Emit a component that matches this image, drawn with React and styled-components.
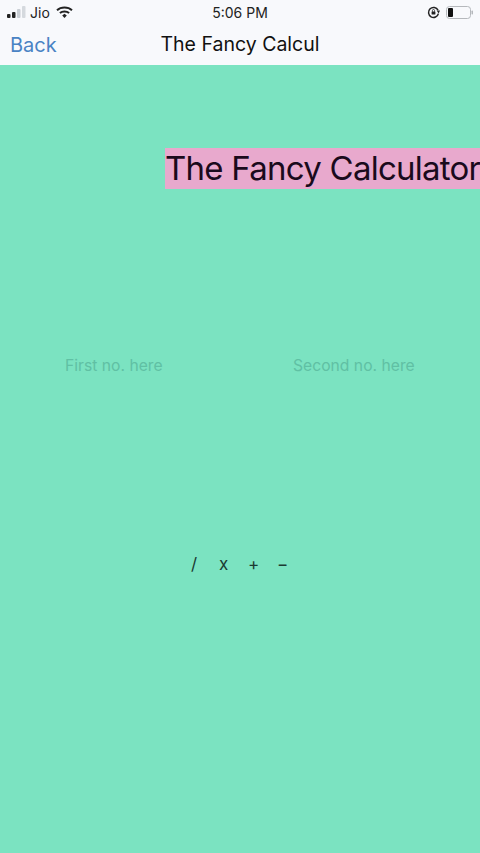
import styled, { createGlobalStyle } from 'styled-components';

const GlobalStyle = createGlobalStyle`
    html, body {
        margin: 0;
        padding: 0;
    }
    body {
        font-family: Inter, "Liberation Sans", sans-serif;
    }
`;

export default function App() {
    return (
        <Page>
            <GlobalStyle />
            <StatusBar>
                <StatusLeft>
                    <svg width="22" height="12" viewBox="0 0 22 12">
                        <rect x="0" y="8" width="3.5" height="4" rx="1" fill="#222" />
                        <rect x="5" y="6" width="3.5" height="6" rx="1" fill="#222" />
                        <rect x="10" y="3" width="3.5" height="9" rx="1" fill="#c9ced4" />
                        <rect x="15" y="0" width="3.5" height="12" rx="1" fill="#d5d9de" />
                    </svg>
                    <Carrier>Jio</Carrier>
                    <svg width="17" height="12" viewBox="0 0 17 12">
                        <path d="M1 4.2 C5 0.6 12 0.6 16 4.2" fill="none" stroke="#222" strokeWidth="2" />
                        <path d="M3.9 7 C6.4 4.9 10.6 4.9 13.1 7" fill="none" stroke="#222" strokeWidth="2" />
                        <path d="M6.2 9.5 L8.5 7.8 L10.8 9.5 L8.5 12 Z" fill="#222" />
                    </svg>
                </StatusLeft>
                <Clock>5:06 PM</Clock>
                <StatusRight>
                    <svg width="13" height="13" viewBox="0 0 13 13">
                        <path d="M11 4.2 A5 5 0 1 0 11.4 7.6" fill="none" stroke="#222" strokeWidth="1.5" />
                        <path d="M9.6 4.6 L13 4.6 L11.6 7.4 Z" fill="#222" />
                        <rect x="4.6" y="5.6" width="3.8" height="3" rx="0.5" fill="#222" />
                        <path d="M5.4 5.8 V4.6 A1.1 1.1 0 0 1 7.6 4.6 V5.8" fill="none" stroke="#222" strokeWidth="0.8" />
                    </svg>
                    <svg width="28" height="13" viewBox="0 0 28 13">
                        <rect x="0.5" y="0.5" width="24" height="12" rx="3" fill="none" stroke="#b5b8bc" />
                        <rect x="2" y="2" width="5" height="9" rx="1" fill="#111" />
                        <rect x="25.5" y="4.5" width="1.5" height="4" rx="0.7" fill="#b5b8bc" />
                    </svg>
                </StatusRight>
            </StatusBar>
            <NavBar>
                <BackLink>Back</BackLink>
                <NavTitle>The Fancy Calcul</NavTitle>
            </NavBar>
            <Main>
                <Title>The Fancy Calculator</Title>
                <Inputs>
                    <NumberInput placeholder="First no. here" $width={228} />
                    <NumberInput placeholder="Second no. here" $width={187} />
                </Inputs>
                <Operators>
                    <Operator>/</Operator>
                    <Operator>x</Operator>
                    <Operator>+</Operator>
                    <Operator>−</Operator>
                </Operators>
            </Main>
        </Page>
    );
}

const Page = styled.div`
    width: 480px;
    height: 853px;
    display: flex;
    flex-direction: column;
    overflow: hidden;
    background: #7be3c1;
`;
const StatusBar = styled.div`
    height: 24px;
    display: grid;
    grid-template-columns: 1fr auto 1fr;
    align-items: center;
    padding: 0 6px 0 7px;
    background: #f8f9fc;
`;
const StatusLeft = styled.div`
    display: flex;
    align-items: center;
    gap: 6px;
`;
const Carrier = styled.span`
    font-size: 14px;
    color: #222;
    margin-left: -5px;
`;
const Clock = styled.span`
    font-size: 14px;
    color: #222;
    margin-left: -1px;
`;
const StatusRight = styled.div`
    display: flex;
    justify-content: flex-end;
    align-items: center;
    gap: 6px;
`;
const NavBar = styled.div`
    position: relative;
    height: 41px;
    box-sizing: border-box;
    padding-bottom: 2px;
    display: flex;
    align-items: center;
    justify-content: center;
    background: #f8f9fc;
`;
const BackLink = styled.span`
    position: absolute;
    left: 10px;
    top: 9px;
    font-size: 20px;
    color: #4a83c4;
`;
const NavTitle = styled.span`
    font-size: 19.5px;
    color: #111;
`;
const Main = styled.div`
    flex: 1;
    display: flex;
    flex-direction: column;
    align-items: center;
    padding-top: 83px;
`;
const Title = styled.div`
    align-self: flex-end;
    width: 315px;
    height: 41px;
    line-height: 40px;
    font-size: 33px;
    letter-spacing: -0.75px;
    white-space: nowrap;
    color: #1a0a1c;
    background: #e8a9cd;
`;
const Inputs = styled.div`
    align-self: flex-start;
    display: flex;
    margin-top: 165px;
    padding-left: 65px;
`;
const NumberInput = styled.input`
    width: ${(p) => p.$width}px;
    height: 22px;
    padding: 0;
    border: 0;
    outline: 0;
    background: transparent;
    font-family: inherit;
    font-size: 15.7px;
    &::placeholder {
        color: #60c0a4;
        opacity: 1;
    }
`;
const Operators = styled.div`
    display: flex;
    gap: 21px;
    margin-top: 177px;
    padding-right: 5px;
`;
const Operator = styled.span`
    width: 8px;
    text-align: center;
    font-size: 17px;
    line-height: 22px;
    color: #1c3a32;
`;
